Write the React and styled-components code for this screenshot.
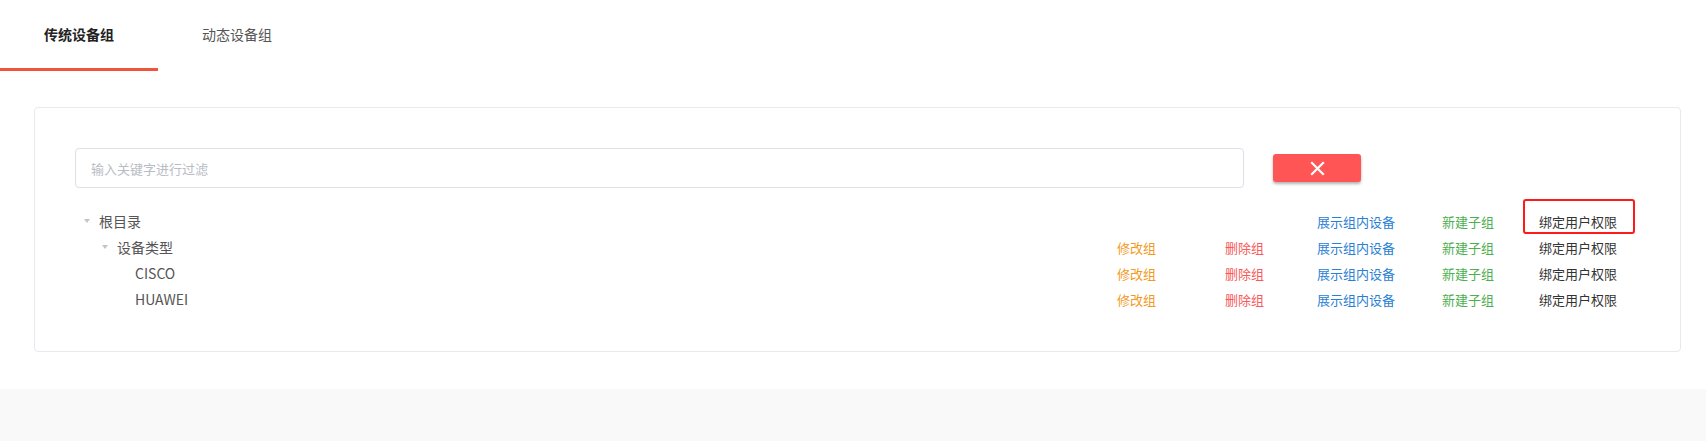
import React, { useState } from 'react'
import styled, { createGlobalStyle } from 'styled-components'

const GlobalStyle = createGlobalStyle`
  html, body {
    margin: 0;
    padding: 0;
    background: #f9f9f9;
    font-family: "Noto Sans CJK SC", "Noto Sans", "Liberation Sans", sans-serif;
  }
`

const Main = styled.div`
  background: #fff;
  padding-bottom: 37px;
`

const TabBar = styled.div`
  display: flex;
  height: 71px;
`

const Tab = styled.div`
  width: 158px;
  box-sizing: border-box;
  display: flex;
  align-items: center;
  justify-content: center;
  padding-bottom: 1px;
  font-size: 14px;
  font-weight: ${p => (p.$active ? 600 : 400)};
  color: ${p => (p.$active ? '#222' : '#555')};
  border-bottom: 3px solid ${p => (p.$active ? '#f0553a' : 'transparent')};
  cursor: pointer;
`

const Card = styled.div`
  margin: 36px 25px 0 34px;
  border: 1px solid #e8e8ee;
  border-radius: 4px;
  padding: 40px 40px 39px 40px;
`

const FilterRow = styled.div`
  display: flex;
  align-items: center;
  gap: 29px;
`

const FilterInput = styled.input`
  width: 1169px;
  height: 40px;
  box-sizing: border-box;
  border: 1px solid #dcdfe6;
  border-radius: 4px;
  padding: 0 15px;
  font-size: 13px;
  font-family: inherit;
  color: #606266;
  outline: none;
  &::placeholder {
    color: #b8bcc4;
  }
`

const ClearBtn = styled.button`
  width: 88px;
  height: 28px;
  border: none;
  border-radius: 3px;
  background: #ff5555;
  box-shadow: 0 2px 3px rgba(0, 0, 0, 0.3);
  display: flex;
  align-items: center;
  justify-content: center;
  cursor: pointer;
`

const Tree = styled.div`
  margin-top: 20px;
  display: flex;
  flex-direction: column;
`

const Node = styled.div`
  display: flex;
  align-items: center;
  height: 26px;
  padding-left: ${p => p.$level * 18}px;
`

const Arrow = styled.span`
  width: 24px;
  flex-shrink: 0;
  display: flex;
  justify-content: center;
  align-items: center;
  &::before {
    content: '';
    display: ${p => (p.$leaf ? 'none' : 'block')};
    border-left: 3px solid transparent;
    border-right: 3px solid transparent;
    border-top: 4px solid #c0c4cc;
  }
`

const Label = styled.span`
  flex: 1;
  font-size: 14px;
  color: #555;
`

const Actions = styled.div`
  display: flex;
  padding-right: 7px;
`

const Action = styled.span`
  position: relative;
  width: ${p => p.$w}px;
  text-align: center;
  font-size: 13px;
  color: ${p => p.$color};
  cursor: pointer;
`

const Highlight = styled.span`
  position: absolute;
  left: 0;
  top: -13px;
  width: 112px;
  height: 35px;
  box-sizing: border-box;
  border: 2.5px solid #ff1a1a;
  border-radius: 3px;
  pointer-events: none;
`

const nodes = [
  { label: '根目录', level: 0, root: true },
  { label: '设备类型', level: 1 },
  { label: 'CISCO', level: 2, leaf: true },
  { label: 'HUAWEI', level: 2, leaf: true },
]

const App = () => {
  const [tab, setTab] = useState(0)
  return (
    <>
      <GlobalStyle />
      <Main>
        <TabBar>
          {['传统设备组', '动态设备组'].map((t, i) => (
            <Tab key={t} $active={tab === i} onClick={() => setTab(i)}>{t}</Tab>
          ))}
        </TabBar>
        <Card>
          <FilterRow>
            <FilterInput placeholder="输入关键字进行过滤" />
            <ClearBtn>
              <svg width="15" height="15" viewBox="0 0 15 15">
                <path d="M2 2L13 13M13 2L2 13" stroke="#fff" strokeWidth="2.2" strokeLinecap="square" />
              </svg>
            </ClearBtn>
          </FilterRow>
          <Tree>
            {nodes.map(n => (
              <Node key={n.label} $level={n.level}>
                <Arrow $leaf={n.leaf} />
                <Label>{n.label}</Label>
                <Actions>
                  <Action $w={107} $color="#f39a1e">{n.root ? '' : '修改组'}</Action>
                  <Action $w={109} $color="#f85a5a">{n.root ? '' : '删除组'}</Action>
                  <Action $w={114} $color="#2a7fd4">展示组内设备</Action>
                  <Action $w={110} $color="#4caf50">新建子组</Action>
                  <Action $w={110} $color="#333">
                    绑定用户权限
                    {n.root && <Highlight />}
                  </Action>
                </Actions>
              </Node>
            ))}
          </Tree>
        </Card>
      </Main>
    </>
  )
}

export default App
